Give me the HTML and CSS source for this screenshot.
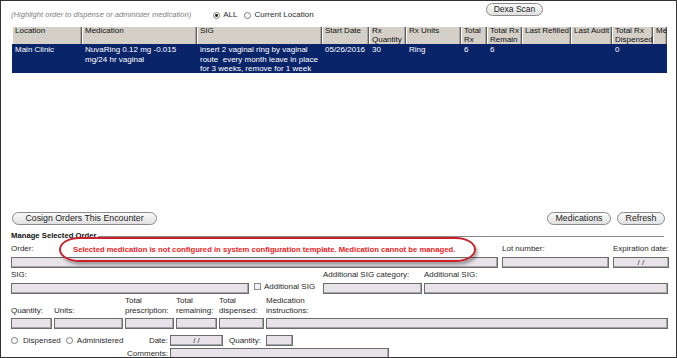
FILE: index.html
```html
<!DOCTYPE html>
<html lang="en">
<head>
<meta charset="utf-8">
<title>Manage Orders</title>
<link rel="stylesheet" href="styles.css">
</head>
<body>
<div class="frame">
  <div class="topbar">
    <span class="hint">(Highlight order to dispense or administer medication)</span>
    <span class="radio radio-all"><svg class="rdo" viewBox="0 0 7 7" width="7" height="7"><circle cx="3.5" cy="3.5" r="3" fill="#fff" stroke="#7a7a7a" stroke-width="1"/><circle cx="3.5" cy="3.5" r="1.4" fill="#111"/></svg><span class="rlabel">ALL</span></span>
    <span class="radio radio-loc"><svg class="rdo" viewBox="0 0 7 7" width="7" height="7"><circle cx="3.5" cy="3.5" r="3" fill="#fff" stroke="#7a7a7a" stroke-width="1"/></svg><span class="rlabel">Current Location</span></span>
    <button class="btn btn-dexa">Dexa Scan</button>
  </div>

  <div class="gridwrap">
    <div class="orders">
      <div class="th">Location</div>
      <div class="th">Medication</div>
      <div class="th">SIG</div>
      <div class="th">Start Date</div>
      <div class="th">Rx<br>Quantity</div>
      <div class="th">Rx Units</div>
      <div class="th">Total<br>Rx</div>
      <div class="th">Total Rx<br>Remain</div>
      <div class="th">Last Refilled</div>
      <div class="th">Last Audit</div>
      <div class="th">Total Rx<br>Dispensed</div>
      <div class="th">Me</div>

      <div class="td">Main Clinic</div>
      <div class="td">NuvaRing 0.12 mg -0.015<br>mg/24 hr vaginal</div>
      <div class="td">insert 2 vaginal ring by vaginal<br>route &nbsp;every month leave in place<br>for 3 weeks, remove for 1 week</div>
      <div class="td">05/26/2016</div>
      <div class="td">30</div>
      <div class="td">Ring</div>
      <div class="td">6</div>
      <div class="td">6</div>
      <div class="td"></div>
      <div class="td"></div>
      <div class="td">0</div>
      <div class="td"></div>
    </div>
  </div>

  <div class="btnrow">
    <button class="btn btn-cosign">Cosign Orders This Encounter</button>
    <button class="btn btn-meds">Medications</button>
    <button class="btn btn-refresh">Refresh</button>
  </div>

  <div class="section">
    <div class="legend"><span class="legend-text">Manage Selected Order</span></div>

    <div class="row row1">
      <div class="field"><div class="lbl">Order:</div><div class="input"></div></div>
      <div class="field"><div class="lbl">Lot number:</div><div class="input"></div></div>
      <div class="field"><div class="lbl">Expiration date:</div><div class="input date">/ /</div></div>
    </div>

    <div class="row row2">
      <div class="field f-sig"><div class="lbl">SIG:</div><div class="input"></div></div>
      <div class="checkcol"><span class="chk"></span><span class="chklbl">Additional SIG</span></div>
      <div class="field f-cat"><div class="lbl">Additional SIG category:</div><div class="input"></div></div>
      <div class="field f-add"><div class="lbl">Additional SIG:</div><div class="input"></div></div>
    </div>

    <div class="row row3">
      <div class="field"><div class="lbl2">Quantity:</div><div class="input"></div></div>
      <div class="field"><div class="lbl2">Units:</div><div class="input"></div></div>
      <div class="field"><div class="lbl2">Total<br>prescription:</div><div class="input"></div></div>
      <div class="field"><div class="lbl2">Total<br>remaining:</div><div class="input"></div></div>
      <div class="field"><div class="lbl2">Total<br>dispensed:</div><div class="input"></div></div>
      <div class="field"><div class="lbl2">Medication<br>instructions:</div><div class="input"></div></div>
    </div>

    <div class="row row4">
      <div class="left">
        <span class="radio"><svg class="rdo" viewBox="0 0 7 7" width="7" height="7"><circle cx="3.5" cy="3.5" r="3" fill="#fff" stroke="#7a7a7a" stroke-width="1"/></svg><span class="rlabel r-disp">Dispensed</span></span>
        <span class="radio radio-adm"><svg class="rdo" viewBox="0 0 7 7" width="7" height="7"><circle cx="3.5" cy="3.5" r="3" fill="#fff" stroke="#7a7a7a" stroke-width="1"/></svg><span class="rlabel r-adm">Administered</span></span>
        <span class="inlbl">Date:</span>
      </div>
      <div class="input date w-date">/ /</div>
      <span class="inlbl qty-lbl">Quantity:</span>
      <div class="input w-qty"></div>
    </div>

    <div class="row row5">
      <div class="left"><span class="inlbl">Comments:</span></div>
      <div class="input w-comments"></div>
    </div>
  </div>

  <div class="callout">Selected medication is not configured in system configuration template. Medication cannot be managed.</div>
</div>
</body>
</html>
```

FILE: styles.css
```css
html, body {
  margin: 0;
  padding: 0;
  background: #fff;
}

body {
  font-family: "Liberation Sans", Arial, sans-serif;
  font-size: 8px;
  color: #2a2a2a;
}

.frame {
  position: relative;
  width: 677px;
  height: 358px;
  box-sizing: border-box;
  border: 1px solid #333;
  padding: 0 8px 0 10px;
  overflow: hidden;
}

/* top bar */
.topbar {
  display: flex;
  align-items: flex-start;
  height: 25px;
}

.hint {
  margin-top: 9px;
  font-style: italic;
  font-size: 7.6px;
  line-height: 10px;
  color: #808080;
}

.radio {
  display: inline-flex;
  align-items: center;
  height: 10px;
  line-height: 10px;
}

.topbar .radio {
  margin-top: 9px;
}

.radio-all {
  margin-left: 22px;
}

.radio-loc {
  margin-left: 7px;
}

.rdo {
  display: block;
  flex: none;
}

.rlabel {
  margin-left: 3px;
}

.btn {
  display: block;
  box-sizing: border-box;
  height: 13px;
  padding: 0;
  margin: 0;
  border: 1px solid #8a8a8a;
  border-radius: 7px;
  background: linear-gradient(#fafafa, #e0e0e0);
  font-family: "Liberation Sans", Arial, sans-serif;
  font-size: 8.8px;
  line-height: 11px;
  color: #1e1e1e;
  text-align: center;
}

.btn-dexa {
  margin-top: 2px;
  margin-left: auto;
  margin-right: 125px;
  width: 57px;
  font-size: 8.5px;
}

/* grid */
.gridwrap {
  height: 186px;
}

.orders {
  display: grid;
  grid-template-columns: 70px 115px 125px 47px 37px 55px 26px 35px 49px 41px 41px 14px;
  width: 655px;
  margin-left: 1px;
}

.th {
  height: 18px;
  box-sizing: border-box;
  padding-left: 3px;
  background: #d4d0c8;
  color: #111;
  line-height: 9px;
  white-space: nowrap;
  overflow: hidden;
  box-shadow: inset 1px 1px 0 #fff, inset -1px 0 0 #5e5e5e, inset -2px 0 0 #a9a6a0;
}

.td {
  height: 29px;
  box-sizing: border-box;
  padding: 1px 0 0 3px;
  background: #0a246a;
  color: #fff;
  line-height: 9.5px;
  white-space: nowrap;
  overflow: hidden;
}

/* buttons row */
.btnrow {
  display: flex;
  height: 13px;
  padding-left: 1px;
}

.btn-cosign {
  width: 145px;
}

.btn-meds {
  width: 64px;
  margin-left: auto;
}

.btn-refresh {
  width: 48px;
  margin-left: 6px;
  margin-right: 3px;
}

/* manage section */
.section {
  margin-top: 6px;
}

.legend {
  display: flex;
  align-items: center;
  height: 10px;
}

.legend-text {
  font-weight: bold;
  font-size: 7.7px;
  line-height: 10px;
  color: #111;
}

.legend::after {
  content: "";
  flex: 1;
  height: 1px;
  background: #8a8a8a;
  margin-left: 2px;
  margin-right: 4px;
}

.row {
  display: flex;
}

.field {
  display: flex;
  flex-direction: column;
}

.lbl {
  height: 10px;
  line-height: 10px;
  margin-bottom: 3px;
  white-space: nowrap;
}

.lbl2 {
  height: 20px;
  line-height: 10px;
  margin-bottom: 2px;
  display: flex;
  flex-direction: column;
  justify-content: flex-end;
  white-space: nowrap;
}

.input {
  height: 11px;
  box-sizing: border-box;
  background: #e7e3e8;
  border: 1px solid #6c6c6c;
  box-shadow: inset -1px -1px 0 #a8a5aa;
}

.date {
  text-align: center;
  line-height: 9px;
  font-size: 8px;
  color: #333;
}

.row1 {
  display: grid;
  grid-template-columns: 487px 107px 1fr;
  column-gap: 4px;
  margin-top: 3px;
}

.row2 {
  margin-top: 2px;
}

.f-sig {
  width: 238px;
}

.checkcol {
  display: flex;
  align-items: flex-start;
  width: 64px;
  margin-left: 5px;
  padding-top: 13px;
}

.chk {
  display: block;
  width: 7px;
  height: 7px;
  box-sizing: border-box;
  border: 1px solid #8c8c8c;
  background: #f4f4f4;
  flex: none;
}

.chklbl {
  margin-left: 3px;
  line-height: 8px;
  white-space: nowrap;
}

.f-cat {
  width: 99px;
  margin-left: 5px;
}

.f-add {
  flex: 1;
  margin-left: 2px;
}

.row3 {
  display: grid;
  grid-template-columns: 41px 69px 49px 41px 45px 1fr;
  column-gap: 2px;
  margin-top: 2px;
}

.row4 {
  align-items: center;
  height: 11px;
  margin-top: 6px;
}

.left {
  display: flex;
  align-items: center;
  width: 157px;
}

.row4 .radio .rlabel {
  margin-left: 5px;
}

.row4 .radio .r-adm {
  margin-left: 4px;
}

.radio-adm {
  margin-left: 5px;
}

.inlbl {
  margin-left: auto;
  line-height: 10px;
  white-space: nowrap;
}

.w-date {
  width: 53px;
  margin-left: 2px;
}

.qty-lbl {
  margin-left: 6px;
  width: 37px;
}

.w-qty {
  width: 27px;
}

.row5 {
  align-items: center;
  margin-top: 2px;
}

.w-comments {
  width: 219px;
  margin-left: 2px;
}

/* annotation callout */
.callout {
  position: absolute;
  left: 58px;
  top: 236px;
  width: 417px;
  height: 25px;
  box-sizing: border-box;
  display: flex;
  align-items: center;
  padding-left: 12px;
  border: 2px solid #c9202a;
  border-radius: 20px / 12.5px;
  box-shadow: 2px 3px 3px rgba(0, 0, 0, 0.3);
  font-weight: bold;
  font-size: 7.7px;
  line-height: 10px;
  color: #ee1c24;
  white-space: nowrap;
}
```
